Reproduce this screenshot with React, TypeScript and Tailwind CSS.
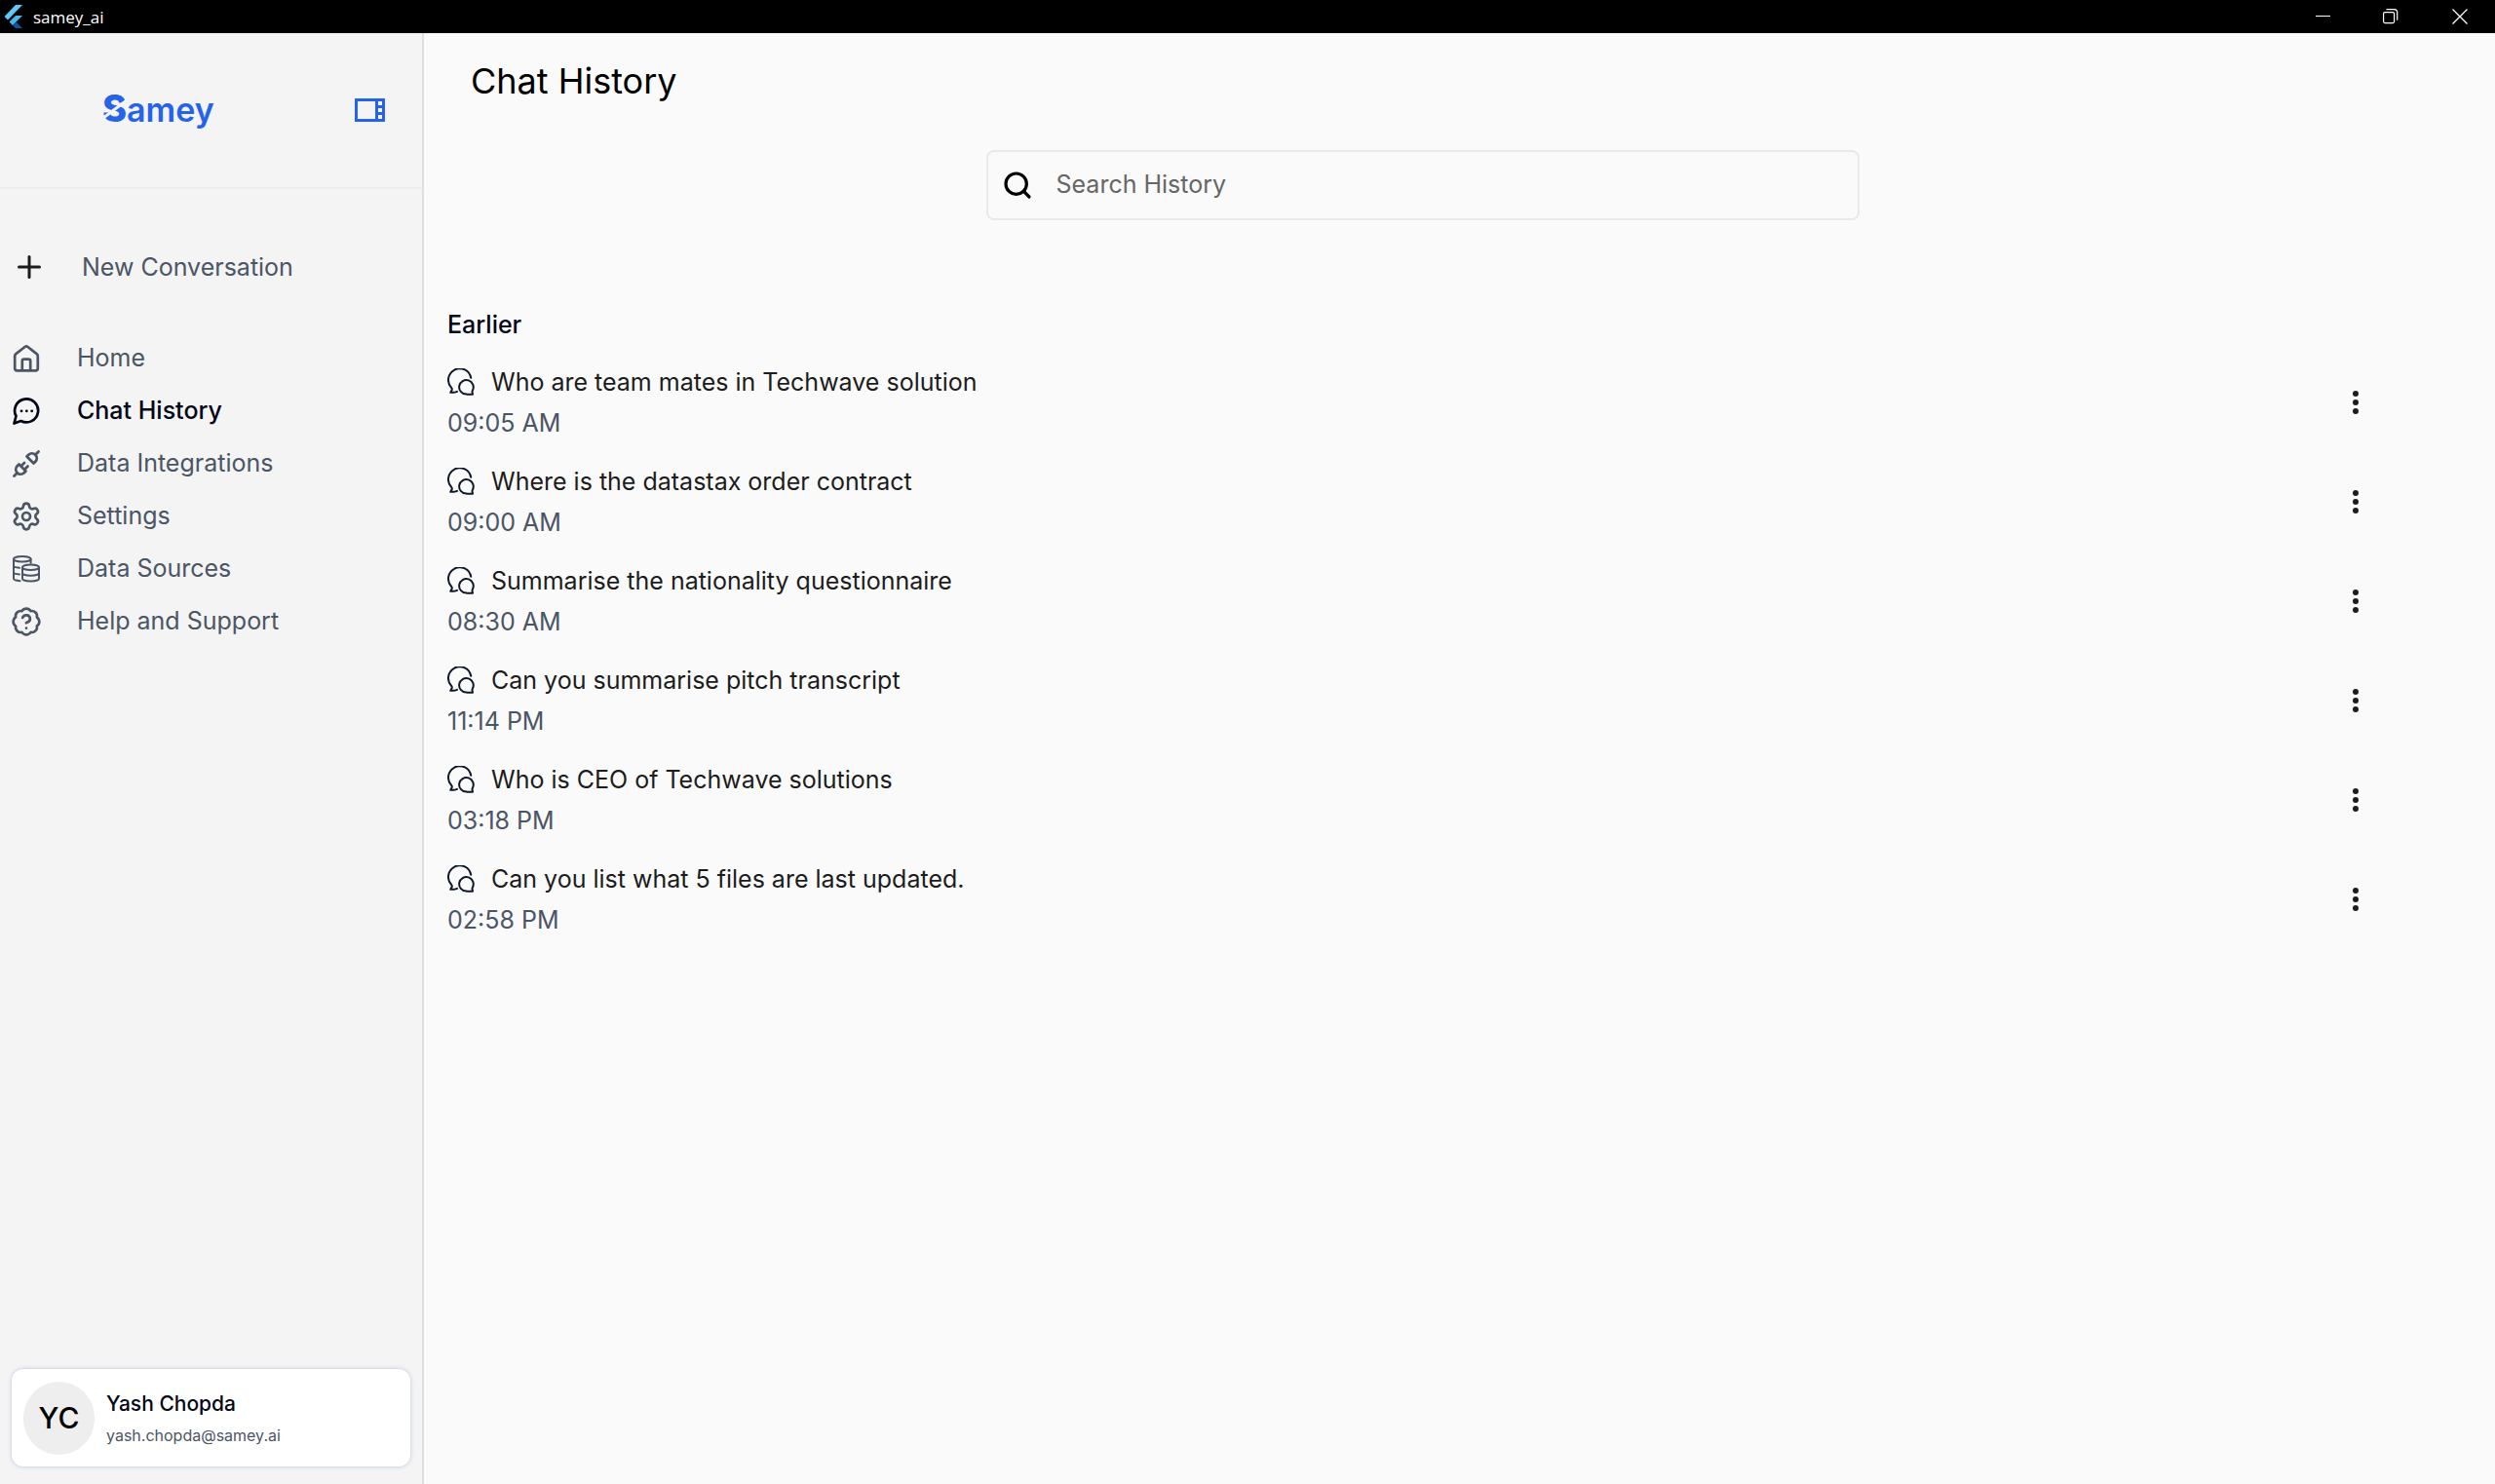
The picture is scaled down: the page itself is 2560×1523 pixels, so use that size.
import React, { useState } from 'react';
import { Settings, Search, BadgeHelp, Plus } from 'lucide-react';

interface IconProps {
  className?: string;
}

interface NavItem {
  label: string;
  icon: React.ReactNode;
}

interface Conversation {
  id: number;
  title: string;
  time: string;
}

const conversations: Conversation[] = [
  { id: 1, title: 'Who are team mates in Techwave solution', time: '09:05 AM' },
  { id: 2, title: 'Where is the datastax order contract', time: '09:00 AM' },
  { id: 3, title: 'Summarise the nationality questionnaire', time: '08:30 AM' },
  { id: 4, title: 'Can you summarise pitch transcript', time: '11:14 PM' },
  { id: 5, title: 'Who is CEO of Techwave solutions', time: '03:18 PM' },
  { id: 6, title: 'Can you list what 5 files are last updated.', time: '02:58 PM' },
];

const FlutterIcon: React.FC<IconProps> = ({ className }) => (
  <svg viewBox="0 0 20 24" className={className} aria-hidden="true">
    <path d="M12 0h7L4 15.500.5 12z" fill="#5fc9f8" />
    <path d="M12 11h7l-6.500 6.500L9 21l-3.500-3.500z" fill="#42b9ee" />
    <path d="M9 21l3.500-3.500L19 24h-7z" fill="#0a58a0" />
  </svg>
);

const PanelIcon: React.FC<IconProps> = ({ className }) => (
  <svg viewBox="0 0 31 24" className={className} fill="none" stroke="currentColor" strokeWidth="3" aria-hidden="true">
    <path d="M1.500 1.500h28v21h-28z" />
    <path d="M22.500 1.500v21M22.500 8.500h7M22.500 15.500h7" />
  </svg>
);

const HomeIcon: React.FC<IconProps> = ({ className }) => (
  <svg viewBox="0 0 28 28" className={className} fill="none" stroke="currentColor" strokeWidth="2.700" strokeLinejoin="round" aria-hidden="true">
    <path d="M2.200 11.500c0-1 .4-1.800 1.200-2.400L12.500 2c1-.8 2-.8 3 0l9.100 7.100c.8.600 1.200 1.400 1.200 2.400V24c0 1.500-.8 2.300-2.300 2.300h-19C3 26.300 2.200 25.500 2.200 24z" />
    <path d="M9.800 26V16.500c0-1.200.6-1.800 1.800-1.800h4.800c1.200 0 1.800.6 1.800 1.800V26" />
  </svg>
);

const ChatIcon: React.FC<IconProps> = ({ className }) => (
  <svg viewBox="0 0 28 28" className={className} fill="none" stroke="currentColor" strokeWidth="2.700" strokeLinejoin="round" strokeLinecap="round" aria-hidden="true">
    <path d="M1.500 26.500l2-7.500a12 12 0 1 1 5 5z" />
    <path d="M9 13.800h.1M14.300 13.800h.1M19.600 13.800h.1" strokeWidth="2.800" />
  </svg>
);

const PlugIcon: React.FC<IconProps> = ({ className }) => (
  <svg viewBox="0 0 28 28" className={className} fill="none" stroke="currentColor" strokeWidth="2.800" strokeLinejoin="round" strokeLinecap="round" aria-hidden="true">
    <path d="M14.500 6.500l7 7 1.800-1.800a4.950 4.950 0 0 0-7-7z" />
    <path d="M23.500 4.500l3-3M1.500 26.500l3-3" />
    <path d="M4.700 16.300a4.950 4.950 0 0 0 7 7l1.800-1.800-7-7z" />
    <path d="M9 16l3-3M12.500 19.500l3-3" />
  </svg>
);

const DataSourcesIcon: React.FC<IconProps> = ({ className }) => (
  <svg viewBox="0 0 28 28" className={className} fill="none" stroke="currentColor" strokeWidth="2" strokeLinecap="round" aria-hidden="true">
    <ellipse cx="9.800" cy="3.800" rx="8.800" ry="2.800" />
    <path d="M18.600 3.800v4M1 3.800v20c0 1.200 2.500 2 6.500 2.400M1 10.500c0 1.200 2.500 2 6 2.300M1 17.200c0 1.200 2.500 2 6 2.300" />
    <ellipse cx="18.500" cy="12.300" rx="8.500" ry="2.800" />
    <path d="M10 12.300v11.400c0 1.600 3.800 2.800 8.500 2.800s8.500-1.200 8.500-2.800V12.300M10 18c0 1.600 3.800 2.800 8.500 2.800S27 19.600 27 18" />
  </svg>
);

const ConversationIcon: React.FC<IconProps> = ({ className }) => (
  <svg viewBox="0 0 28 28" className={className} fill="none" stroke="currentColor" strokeWidth="2" strokeLinejoin="round" strokeLinecap="round" aria-hidden="true">
    <path d="M24.200 9.800A11.700 11.700 0 1 0 4.200 20c.8.900.7 1.800.2 2.700L3.300 24.800H6c1.700 0 2.700-.4 4-1" />
    <path d="M25.500 24.300l.5 2.400c-2 0-4.500.3-6.700-.1a7.300 7.300 0 1 1 6.600-3.900c-.3.500-.5 1-.4 1.600z" />
  </svg>
);

const navItems: NavItem[] = [
  { label: 'Home', icon: <HomeIcon className="h-7 w-7" /> },
  { label: 'Chat History', icon: <ChatIcon className="h-7 w-7" /> },
  { label: 'Data Integrations', icon: <PlugIcon className="h-7 w-7" /> },
  { label: 'Settings', icon: <Settings className="h-8 w-8" /> },
  { label: 'Data Sources', icon: <DataSourcesIcon className="h-7 w-7" /> },
  { label: 'Help and Support', icon: <BadgeHelp className="h-8 w-8" /> },
];

const TitleBar: React.FC = () => (
  <header className="flex h-[34px] shrink-0 items-center justify-between bg-black text-white">
    <div className="flex items-center gap-[10px] pl-1">
      <FlutterIcon className="h-6 w-5" />
      <span className="pt-0.5 font-['Open_Sans',sans-serif] text-[17px] leading-6">samey_ai</span>
    </div>
    <div className="flex h-full">
      <button aria-label="Minimize" className="flex w-[70px] items-center justify-center">
        <svg viewBox="0 0 16 16" className="h-4 w-4" stroke="currentColor" strokeWidth="1"><path d="M1 7.500h15" /></svg>
      </button>
      <button aria-label="Restore" className="flex w-[70px] items-center justify-center">
        <svg viewBox="0 0 16 16" className="h-4 w-4" fill="none" stroke="currentColor" strokeWidth="1.200">
          <rect x="0.600" y="3.600" width="11" height="11" rx="1.500" />
          <path d="M3.500.6h8c2 0 3.200 1.200 3.200 3.200v8" />
        </svg>
      </button>
      <button aria-label="Close" className="flex w-[72px] items-center justify-center">
        <svg viewBox="0 0 16 16" className="h-4 w-4" stroke="currentColor" strokeWidth="1.300"><path d="M.5.5l15 15M15.500.5l-15 15" /></svg>
      </button>
    </div>
  </header>
);

const App: React.FC = () => {
  const [active, setActive] = useState('Chat History');
  const [query, setQuery] = useState('');

  const visible = conversations.filter((c) => c.title.toLowerCase().includes(query.toLowerCase()));

  return (
    <div className="flex min-h-screen flex-col bg-[#fafafa] font-[Inter,sans-serif] text-[#1c1c1c]">
      <TitleBar />
      <div className="flex flex-1">
        {/* Sidebar */}
        <aside className="flex w-[435px] shrink-0 flex-col border-r-2 border-[#dedede] bg-[#f4f4f4] text-[#4b5565]">
          <div className="flex h-40 items-center justify-between border-b-2 border-[#eeeeee] pr-[38px] pl-[105px] text-[#2563eb]">
            <div className="relative pb-0.5 text-[34px] leading-10 font-semibold">
              <span className="text-[38px] font-extrabold">S</span>amey
              {/* diagonal cut through the S */}
              <svg viewBox="0 0 26 40" className="absolute top-0 left-0 h-10 w-[26px]" stroke="#f4f4f4" strokeWidth="3" aria-hidden="true">
                <path d="M1 30L25 12" />
              </svg>
            </div>
            <button aria-label="Toggle sidebar">
              <PanelIcon className="h-6 w-[31px]" />
            </button>
          </div>

          <button className="mt-[60px] flex items-center gap-9 pl-3 text-left text-[25px] leading-10">
            <Plus className="h-9 w-9 text-[#1c1c1c]" />
            New Conversation
          </button>

          <nav className="mt-[47px] flex flex-col">
            {navItems.map((item) => (
              <button
                key={item.label}
                onClick={() => setActive(item.label)}
                className={`flex h-[54px] items-center gap-9 pl-[11px] text-left text-[25px] ${
                  active === item.label ? 'font-medium text-[#020617]' : ''
                }`}
              >
                <span className="flex h-8 w-8 items-center justify-center">{item.icon}</span>
                {item.label}
              </button>
            ))}
          </nav>

          {/* User card */}
          <div className="mx-3 mt-auto mb-[18px] flex h-[100px] items-center gap-3 rounded-xl bg-white pl-3 shadow-[0_0_4px_#b8c4d6]">
            <div className="flex h-[75px] w-[73px] items-center justify-center rounded-full bg-[#eeeeee] text-[30px] font-medium text-black">
              YC
            </div>
            <div className="pt-[3px]">
              <p className="text-[21px] leading-8 font-medium text-[#020617]">Yash Chopda</p>
              <p className="text-[16px] leading-8">yash.chopda@samey.ai</p>
            </div>
          </div>
        </aside>

        {/* Main */}
        <main className="flex-1">
          <h1 className="pt-[27px] pl-12 text-[36px] leading-[44px] text-black">Chat History</h1>

          <div className="mt-[49px] flex justify-center pr-[76px]">
            <label className="flex h-[72px] w-[35vw] items-center gap-6 rounded-lg border-2 border-[#e9e9ec] pl-[14px]">
              <Search className="h-8 w-8 text-black" strokeWidth={2.4} />
              <input
                type="text"
                aria-label="Search History"
                placeholder="Search History"
                value={query}
                onChange={(e) => setQuery(e.target.value)}
                className="flex-1 bg-transparent text-[25px] outline-none placeholder:text-[#666666]"
              />
            </label>
          </div>

          <section className="mt-[87px] pr-[119px] pl-6">
            <h2 className="text-[25px] leading-10 font-medium text-[#020617]">Earlier</h2>
            <ul className="mt-[9px]">
              {visible.map((c) => (
                <li key={c.id} className="flex h-[102px] items-center justify-between">
                  <div>
                    <div className="flex items-center gap-[17px]">
                      <ConversationIcon className="h-7 w-7 text-[#0f172a]" />
                      <span className="text-[25px] leading-[42px]">{c.title}</span>
                    </div>
                    <p className="text-[25px] leading-[42px] text-[#4b5565]">{c.time}</p>
                  </div>
                  <button aria-label={`Options for ${c.title}`} className="flex h-12 w-12 items-center justify-center">
                    <svg viewBox="0 0 6 24" className="h-6 w-[6px]" fill="currentColor" aria-hidden="true">
                      <circle cx="3" cy="3" r="3" />
                      <circle cx="3" cy="12" r="3" />
                      <circle cx="3" cy="21" r="3" />
                    </svg>
                  </button>
                </li>
              ))}
            </ul>
          </section>
        </main>
      </div>
    </div>
  );
};

export default App;
